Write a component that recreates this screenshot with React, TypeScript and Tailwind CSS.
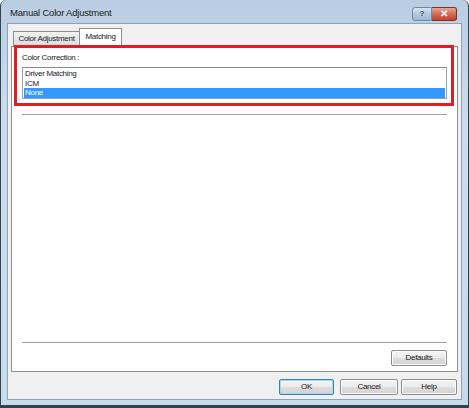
import React from "react";

const font = { fontFamily: '"Liberation Sans", Arial, sans-serif' };

function WinButton({ label, wide, primary }: { label: string; wide: string; primary?: boolean }) {
  return (
    <div
      className={`${wide} h-[16px] flex items-center justify-center rounded-[2px] border text-[8px] leading-none text-[#1a1a1a] tracking-[-0.3px] bg-[linear-gradient(#f4f4f4_0%,#ebebeb_48%,#dddddd_52%,#d2d2d2_100%)] ${
        primary ? "border-[#3c7fb1] shadow-[inset_0_0_0_1px_#a8d6f0]" : "border-[#8c8c8c] shadow-[inset_0_0_0_1px_#fbfbfb]"
      }`}
    >
      {label}
    </div>
  );
}

export default function App() {
  return (
    <div style={font} className="w-[469px] h-[408px] flex flex-col bg-[linear-gradient(#b9cde2_0%,#cddcec_30%,#c8dbea_100%)] border-l border-r border-b-[3px] border-[#2f4450] rounded-t-[6px] overflow-hidden">
      {/* title bar */}
      <div className="h-[23px] shrink-0 flex items-center pl-[9px] pr-[10px]">
        <span className="text-[9.5px] text-[#1b1b1b] tracking-[-0.2px] mt-[3px]">Manual Color Adjustment</span>
        <div className="ml-auto flex mt-[5px] mr-[1px]">
          <div className="w-[20px] h-[14px] flex items-center justify-center rounded-l-[3px] border border-[#6f8aa6] bg-[linear-gradient(#d4e3f1_0%,#b3c9df_50%,#9db8d2_100%)] text-[8px] font-bold text-[#3b4a5a]">
            ?
          </div>
          <div className="w-[25px] h-[14px] flex items-center justify-center rounded-r-[3px] border border-l-0 border-[#7d3328] bg-[linear-gradient(#e8a493_0%,#d16b55_50%,#c2442c_100%)] text-[10px] font-bold text-white leading-none">
            ✕
          </div>
        </div>
      </div>

      {/* client area */}
      <div className="flex-1 mx-[6px] mb-[5px] border border-[#8da3b8] bg-[#f0f0f0] flex flex-col">
        {/* tabs */}
        <div className="h-[22px] shrink-0 flex items-end pl-[5px]">
          <div className="h-[15px] w-[67px] flex items-center justify-center border border-b-0 border-[#8c8e94] bg-[linear-gradient(#f2f2f2,#dcdcdc)] text-[8px] text-[#1a1a1a] tracking-[-0.3px] mb-0">
            Color Adjustment
          </div>
          <div className="h-[19px] w-[43px] -ml-px flex items-center justify-center border border-b-0 border-[#8c8e94] bg-white text-[8px] text-[#1a1a1a] tracking-[-0.3px] relative z-10 mb-[-1px] pb-[3px]">
            Matching
          </div>
        </div>

        {/* tab panel */}
        <div className="mx-[3px] h-[326px] border border-[#8c8e94] bg-white flex flex-col">
          <div className="mt-[-2px] ml-[2px] mr-[3px] h-[61px] border-[3px] border-[#dc1f26] flex flex-col pl-[5px] pr-[4px] relative z-20">
            <div className="mt-[6px] text-[8px] text-[#1a1a1a] tracking-[-0.3px] leading-none">Color Correction :</div>
            <div className="mt-[5px] h-[32px] border border-[#9a9ea6] border-t-[#858a92] bg-white flex flex-col text-[8px] leading-[9.5px] tracking-[-0.3px] text-[#1a1a1a] pt-[1px] px-[1px]">
              <div className="pl-[1px]">Driver Matching</div>
              <div className="pl-[1px]">ICM</div>
              <div className="pl-[1px] bg-[#3399ff] text-white h-[10px]">None</div>
            </div>
          </div>

          <div className="mt-[8px] mx-[10px] h-[2px] border-t border-[#a0a0a0] border-b-white" />
          <div className="flex-1" />
          <div className="mx-[10px] h-[2px] border-t border-[#a0a0a0]" />

          <div className="flex justify-end pr-[10px] mt-[6px] mb-[5px]">
            <WinButton label="Defaults" wide="w-[56px]" />
          </div>
        </div>

        {/* dialog buttons */}
        <div className="flex justify-end gap-[6px] pr-[4px] mt-[7px]">
          <WinButton label="OK" wide="w-[55px]" primary />
          <WinButton label="Cancel" wide="w-[58px]" />
          <div className="-ml-[3px]">
            <WinButton label="Help" wide="w-[56px]" />
          </div>
        </div>
      </div>
    </div>
  );
}
